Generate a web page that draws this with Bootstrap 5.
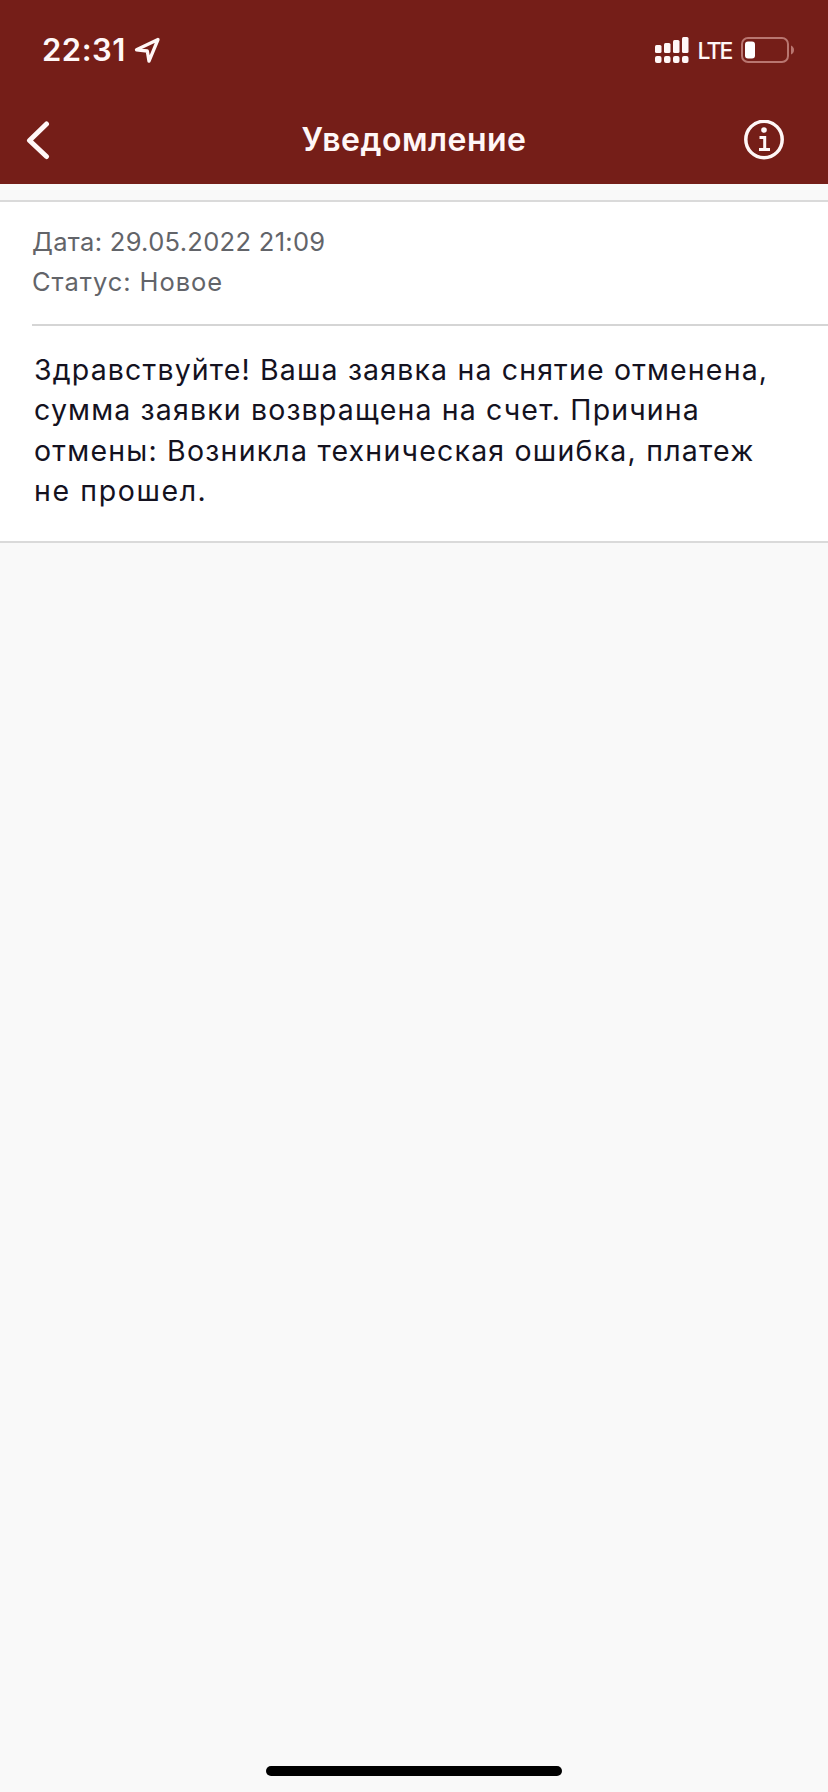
<!DOCTYPE html>
<html lang="ru">
<head>
<meta charset="utf-8">
<meta name="viewport" content="width=device-width, initial-scale=1">
<title>Уведомление</title>
<link href="https://cdn.jsdelivr.net/npm/bootstrap@5.3.0/dist/css/bootstrap.min.css" rel="stylesheet">
<style>
body { background: #f9f9f9; font-family: Inter, "Noto Sans", sans-serif; color: #14121f; }
.app-head { background: #751e18; height: 184px; color: #fff7f7; }
.status-bar { height: 100px; padding: 0 34px 0 42px; }
.clock { font-size: 31px; font-weight: 600; line-height: 38px; letter-spacing: .5px; }
.lte { font-size: 23px; font-weight: 500; line-height: 30px; margin: 1px 9.5px 0 8px; letter-spacing: -1.9px; }
.title-bar { height: 84px; padding: 0 44px 4px 26px; }
.title-bar h1 { font-size: 32px; font-weight: 600; line-height: 40px; padding: 0 0 1px 34px; letter-spacing: .5px; }
.notice { margin-top: 16px; border-top: 2px solid #dadada; border-bottom: 2px solid #dadada; height: 343px; }
.meta { margin-left: 32px; height: 124px; padding-top: 20px; border-bottom: 2px solid #d5d5d5; color: #626469; font-size: 25.5px; line-height: 40px; letter-spacing: .31px; }
.meta .status-line { letter-spacing: .95px; }
.message { padding: 24px 0 0 34px; font-size: 28.5px; line-height: 40.4px; letter-spacing: 1.15px; }
.message span, .meta span { display: block; white-space: nowrap; }
.message span:nth-child(3) { letter-spacing: 1.21px; }
.message span:last-child { letter-spacing: 1.6px; }
.home-bar { width: 296px; height: 10px; margin-bottom: 16px; }
</style>
</head>
<body class="d-flex flex-column vh-100 overflow-hidden">
<header class="app-head flex-shrink-0">
  <div class="status-bar d-flex align-items-center justify-content-between">
    <div class="d-flex align-items-center">
      <span class="clock">22:31</span>
      <svg class="ms-2" width="27" height="28" viewBox="0 0 27 28" fill="none" stroke="currentColor" stroke-width="3.300" stroke-linejoin="round"><path d="M24 3.500 2.500 13.800l10.800 1.200L15 25.200z"/></svg>
    </div>
    <div class="d-flex align-items-center">
      <svg width="34" height="28" viewBox="0 0 34 28" fill="currentColor"><rect x="0" y="9" width="6.500" height="8" rx="1.500"/><rect x="9" y="7" width="6.500" height="10" rx="1.500"/><rect x="18" y="4" width="6.500" height="13" rx="1.500"/><rect x="27" y="1" width="6.500" height="16" rx="1.500"/><rect x="0" y="20" width="6.500" height="7" rx="2"/><rect x="9" y="20" width="6.500" height="7" rx="2"/><rect x="18" y="20" width="6.500" height="7" rx="2"/><rect x="27" y="20" width="6.500" height="7" rx="2"/></svg>
      <span class="lte">LTE</span>
      <svg width="53" height="26" viewBox="0 0 53 26"><rect x="1" y="1" width="46" height="24" rx="6" fill="none" stroke="#b97670" stroke-width="2"/><rect x="4" y="4.500" width="10" height="17" rx="3" fill="#fff"/><path d="M50 8.500q3 1.500 3 4.500t-3 4.500z" fill="#b97670"/></svg>
    </div>
  </div>
  <nav class="title-bar d-flex align-items-center">
    <svg width="24" height="40" viewBox="0 0 24 40" fill="none" stroke="currentColor" stroke-width="5" stroke-linecap="round" stroke-linejoin="round"><path d="M20.500 4 3.500 20.500l17 16"/></svg>
    <h1 class="m-0 flex-fill text-center">Уведомление</h1>
    <svg width="40" height="40" viewBox="0 0 40 40" fill="none" stroke="currentColor"><circle cx="20" cy="19.500" r="18.200" stroke-width="3.500"/><circle cx="20" cy="10" r="2.800" fill="currentColor" stroke="none"/><path d="M15.500 17.500h5.200v12M15 29.500h11" stroke-width="3"/></svg>
  </nav>
</header>
<main class="flex-grow-1">
  <section class="notice bg-white">
    <div class="meta"><span>Дата: 29.05.2022 21:09</span><span class="status-line">Статус: Новое</span></div>
    <p class="message m-0">
      <span>Здравствуйте! Ваша заявка на снятие отменена,</span>
      <span>сумма заявки возвращена на счет. Причина</span>
      <span>отмены: Возникла техническая ошибка, платеж</span>
      <span>не прошел.</span>
    </p>
  </section>
</main>
<div class="home-bar bg-black rounded-pill mx-auto flex-shrink-0"></div>
<script src="https://cdn.jsdelivr.net/npm/bootstrap@5.3.0/dist/js/bootstrap.bundle.min.js"></script>
</body>
</html>
